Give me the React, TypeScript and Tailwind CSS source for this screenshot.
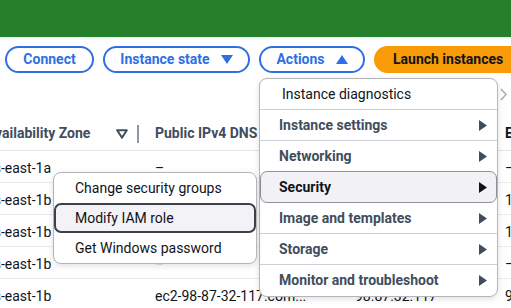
import React from "react"

function Caret({ up }: { up?: boolean }) {
  return (
    <svg width="12" height="9" viewBox="0 0 12 9" className="ml-[11px]">
      <polygon points={up ? "6,0 12,9 0,9" : "0,0 12,0 6,9"} fill="currentColor" />
    </svg>
  )
}

function Arrow({ dark }: { dark?: boolean }) {
  return (
    <svg width="8" height="11" viewBox="0 0 8 11" className="ml-auto">
      <polygon points="0,0 8,5.5 0,11" fill={dark ? "#0f141a" : "#414d5c"} />
    </svg>
  )
}

// cells hidden under the open menus are left empty
const rows = [
  { zone: "us-east-1a", dns: "–", ip: "", last: "–" },
  { zone: "us-east-1b", dns: "", ip: "", last: "1" },
  { zone: "us-east-1b", dns: "", ip: "", last: "1" },
  { zone: "us-east-1b", dns: "–", ip: "", last: "–" },
  { zone: "us-east-1b", dns: "ec2-98-87-32-117.com...", ip: "98.87.32.117", last: "9" },
]

const mainItems = [
  { label: "Instance settings" },
  { label: "Networking" },
  { label: "Security", active: true },
  { label: "Image and templates" },
  { label: "Storage" },
  { label: "Monitor and troubleshoot" },
]

export default function App() {
  return (
    <div className="relative w-[511px] h-[308px] overflow-hidden bg-white font-['Roboto',sans-serif] text-[14px] text-[#0f141a]">
      <div className="h-[37px] bg-[#257f2b]" />
      <div className="h-[3px] bg-gradient-to-b from-[#e9ebee] to-white" />

      {/* toolbar */}
      <div className="flex items-center gap-[9px] pl-[5px] pt-[6px]">
        <button className="h-[27px] w-[89px] shrink-0 rounded-full border-2 border-[#2e6fe3] font-bold text-[#2e6fe3]">
          Connect
        </button>
        <button className="flex h-[27px] w-[147px] shrink-0 items-center justify-center rounded-full border-2 border-[#2e6fe3] font-bold text-[#2e6fe3]">
          Instance state
          <Caret />
        </button>
        <button className="flex h-[27px] w-[106px] shrink-0 items-center justify-center rounded-full border-2 border-[#2e6fe3] font-bold text-[#2e6fe3]">
          Actions
          <Caret up />
        </button>
        <button className="h-[27px] w-[150px] shrink-0 whitespace-nowrap rounded-full bg-[#f89b07] pl-[19px] text-left font-bold text-[#0f141a]">
          Launch instances
        </button>
      </div>

      {/* pagination */}
      <div className="flex h-[43px] items-center justify-end pr-[4px]">
        <svg width="7" height="13" viewBox="0 0 7 13">
          <polyline points="1,1 6,6.5 1,12" fill="none" stroke="#aab0b8" strokeWidth="1.6" />
        </svg>
      </div>

      {/* table, scrolled a little to the right */}
      <div className="flex h-[35px] items-center border-b border-[#e3e5e8] pt-[1px] font-bold text-[#414d5c]">
        <div className="flex w-[155px] shrink-0 items-center pr-[16px]">
          <span className="-ml-[14px] whitespace-nowrap">Availability Zone</span>
          <svg width="12" height="10" viewBox="0 0 12 10" className="ml-auto">
            <polygon points="1.2,1.2 10.8,1.2 6,8.8" fill="none" stroke="#414d5c" strokeWidth="2" strokeLinejoin="round" />
          </svg>
          <div className="ml-[9px] h-[18px] w-[2px] bg-[#8d99a8]" />
        </div>
        <div className="w-[200px] shrink-0 whitespace-nowrap">Public IPv4 DNS</div>
        <div className="w-[148px] shrink-0" />
        <div className="pl-[2px] text-[#0f141a]">E</div>
      </div>
      {rows.map((r, i) => (
        <div key={i} className="flex h-[32px] items-center border-b border-[#e9ebed] pt-[3px] whitespace-nowrap">
          <div className="w-[155px] shrink-0">
            <span className="-ml-[14px]">{r.zone}</span>
          </div>
          <div className="w-[200px] shrink-0">{r.dns}</div>
          <div className="w-[148px] shrink-0">{r.ip}</div>
          <div className="pl-[2px]">{r.last}</div>
        </div>
      ))}

      {/* actions menu */}
      <div className="absolute left-[259px] top-[78px] w-[239px] overflow-hidden rounded-[8px] border border-[#b4b4bb] bg-white shadow-[0_2px_6px_rgba(0,7,22,0.12)]">
        <div className="flex h-[31px] items-center border-b border-[#cfd0d6] pl-[22px] text-[#0f141a]">
          Instance diagnostics
        </div>
        {mainItems.map((it, i) =>
          it.active ? (
            <div
              key={it.label}
              className="-mt-px flex h-[32px] items-center rounded-[7px] border-[1.5px] border-[#8f9099] bg-[#f1f1f6] pl-[18px] pr-[9px] font-bold text-[#0f141a]"
            >
              {it.label}
              <Arrow dark />
            </div>
          ) : (
            <div
              key={it.label}
              className={`flex h-[31px] items-center pl-[19px] pr-[10px] font-bold text-[#414d5c] ${
                i < mainItems.length - 1 && !mainItems[i + 1].active ? "border-b border-[#cfd0d6]" : ""
              }`}
            >
              {it.label}
              <Arrow />
            </div>
          )
        )}
      </div>

      {/* security submenu */}
      <div className="absolute left-[53px] top-[172px] w-[204px] overflow-hidden rounded-[8px] border border-[#b4b4bb] bg-white shadow-[0_2px_6px_rgba(0,7,22,0.12)]">
        <div className="flex h-[30px] items-center pl-[21px]">Change security groups</div>
        <div className="flex h-[30px] items-center rounded-[7px] border-2 border-[#3c4049] bg-[#f2f2f7] pl-[19px]">
          Modify IAM role
        </div>
        <div className="flex h-[30px] items-center pl-[21px]">Get Windows password</div>
      </div>
    </div>
  )
}
